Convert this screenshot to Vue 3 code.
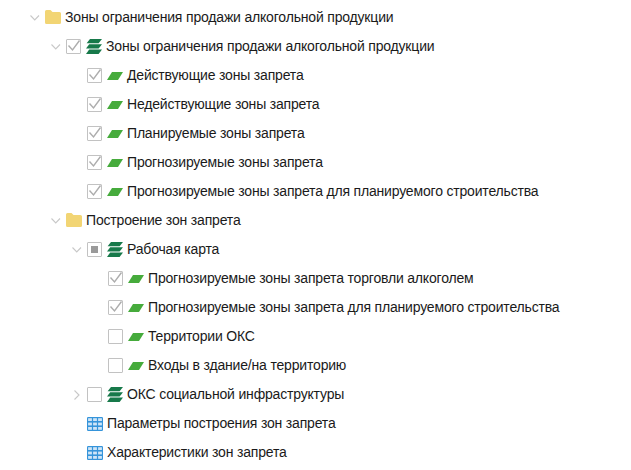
<template>
  <ul class="tree">
    <li v-for="(row, i) in rows" :key="i" class="row" :style="{ paddingLeft: row.level * 21 + 'px' }">
      <svg class="arrow" viewBox="0 0 10 10" :class="{ hidden: !row.arrow }">
        <path v-if="row.arrow === 'open'" d="M0.5 2.5 L4.75 7 L9 2.5" />
        <path v-else-if="row.arrow === 'closed'" d="M2.5 0.5 L7 5 L2.5 9.5" />
      </svg>
      <span v-if="row.check" class="check">
        <svg v-if="row.check === 'on'" viewBox="0 0 15 15"><path d="M2.5 6.5 L6.5 11 L13.5 1.5" /></svg>
        <i v-if="row.check === 'mixed'" class="dot"></i>
      </span>
      <svg v-if="row.icon === 'folder'" class="ico folder" viewBox="0 0 16 14">
        <path d="M1.5 0 H5.5 L7.5 2 H14.5 Q16 2 16 3.5 V12.5 Q16 14 14.5 14 H1.5 Q0 14 0 12.5 V1.5 Q0 0 1.5 0 Z" />
      </svg>
      <svg v-else-if="row.icon === 'layers'" class="ico layers" viewBox="0 0 16 15">
        <path d="M4 0 H16 L12.6 4.2 H0.6 Z" />
        <path d="M3.2 5.2 H16 L12.6 9.4 H0 Z" />
        <path d="M3.2 10.4 H16 L12.6 15 H0 Z" />
      </svg>
      <svg v-else-if="row.icon === 'layer'" class="ico layer" viewBox="0 0 16 8">
        <path d="M5 0 H16 L11 8 H0 Z" />
      </svg>
      <svg v-else-if="row.icon === 'table'" class="ico table" viewBox="0 0 16 14">
        <rect width="16" height="14" rx="1.2" fill="#3594da" />
        <rect v-for="c in cells" :key="c[0] + '-' + c[1]" :x="c[0]" :y="c[1]" width="3.8" height="2.8" fill="#cfe5f7" />
      </svg>
      <span class="label">{{ row.text }}</span>
    </li>
  </ul>
</template>

<script setup>
const rows = [
  { level: 0, arrow: 'open', icon: 'folder', text: 'Зоны ограничения продажи алкогольной продукции' },
  { level: 1, arrow: 'open', check: 'on', icon: 'layers', text: 'Зоны ограничения продажи алкогольной продукции' },
  { level: 2, check: 'on', icon: 'layer', text: 'Действующие зоны запрета' },
  { level: 2, check: 'on', icon: 'layer', text: 'Недействующие зоны запрета' },
  { level: 2, check: 'on', icon: 'layer', text: 'Планируемые зоны запрета' },
  { level: 2, check: 'on', icon: 'layer', text: 'Прогнозируемые зоны запрета' },
  { level: 2, check: 'on', icon: 'layer', text: 'Прогнозируемые зоны запрета для планируемого строительства' },
  { level: 1, arrow: 'open', icon: 'folder', text: 'Построение зон запрета' },
  { level: 2, arrow: 'open', check: 'mixed', icon: 'layers', text: 'Рабочая карта' },
  { level: 3, check: 'on', icon: 'layer', text: 'Прогнозируемые зоны запрета торговли алкоголем' },
  { level: 3, check: 'on', icon: 'layer', text: 'Прогнозируемые зоны запрета для планируемого строительства' },
  { level: 3, check: 'off', icon: 'layer', text: 'Территории ОКС' },
  { level: 3, check: 'off', icon: 'layer', text: 'Входы в здание/на территорию' },
  { level: 2, arrow: 'closed', check: 'off', icon: 'layers', text: 'ОКС социальной инфраструктуры' },
  { level: 2, icon: 'table', text: 'Параметры построения зон запрета' },
  { level: 2, icon: 'table', text: 'Характеристики зон запрета' }
]

const cells = []
for (const x of [1.1, 6.1, 11.1]) {
  for (const y of [1.2, 5.6, 10]) cells.push([x, y])
}
</script>

<style scoped>
.tree {
  list-style: none;
  margin: 0;
  padding: 3px 0 0 30px;
  font-family: "Liberation Sans", Arial, sans-serif;
  font-size: 14px;
  letter-spacing: -0.18px;
  color: #1a1a1a;
}

.row {
  display: flex;
  align-items: center;
  height: 29px;
  white-space: nowrap;
}

.arrow {
  width: 10px;
  height: 10px;
  margin-right: 5px;
  flex: none;
}

.arrow.hidden {
  visibility: hidden;
}

.arrow path {
  fill: none;
  stroke: #c8c8c8;
  stroke-width: 1.1;
}

.check {
  width: 15px;
  height: 15px;
  box-sizing: border-box;
  border: 1.5px solid #c2c2c2;
  border-radius: 1px;
  background: #fff;
  margin-right: 5px;
  flex: none;
  display: flex;
  align-items: center;
  justify-content: center;
}

.check svg {
  width: 15px;
  height: 15px;
  flex: none;
}

.check path {
  fill: none;
  stroke: #adadad;
  stroke-width: 1.4;
}

.dot {
  width: 7px;
  height: 7px;
  background: #9a9a9a;
}

.ico {
  flex: none;
  margin-right: 4px;
}

.folder {
  width: 16px;
  height: 14px;
  margin-top: -2px;
}

.folder path {
  fill: #f2d574;
}

.layers {
  width: 16px;
  height: 15px;
}

.layers path {
  fill: #17794a;
}

.layer {
  width: 16px;
  height: 8px;
}

.layer path {
  fill: #46ab3c;
}

.table {
  width: 16px;
  height: 14px;
}

.label {
  line-height: 29px;
}
</style>
